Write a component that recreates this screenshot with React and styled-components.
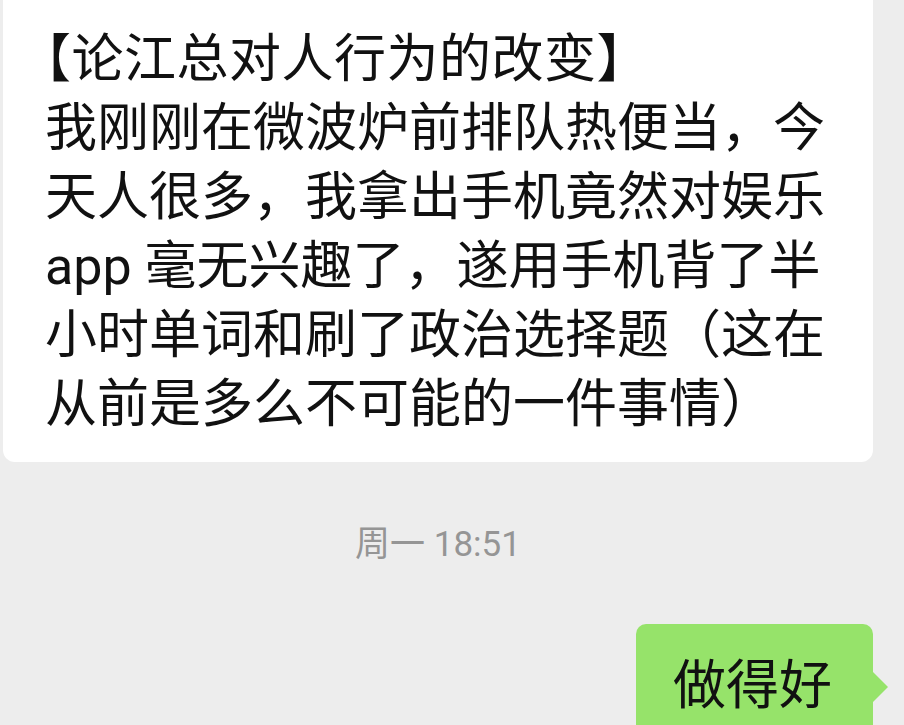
import React from "react"
import styled, { createGlobalStyle } from "styled-components"

const GlobalStyle = createGlobalStyle`
  html, body {
    margin: 0;
    padding: 0;
    background: #ededed;
  }
  body {
    font-family: Roboto, "Noto Sans CJK SC", sans-serif;
  }
`

const Page = styled.div`
  width: 904px;
  height: 725px;
  overflow: hidden;
  display: flex;
  flex-direction: column;
  padding: 0 31px 0 3px;
  box-sizing: border-box;
`

const IncomingBubble = styled.div`
  margin-top: -20px;
  background: #ffffff;
  border-radius: 12px;
  padding: 45px 20px 23px 42px;
`

const Line = styled.div`
  font-size: 52px;
  line-height: 69px;
  color: #111111;
  white-space: nowrap;
  font-feature-settings: ${(p) => (p.$title ? '"halt"' : "normal")};
  letter-spacing: ${(p) => (p.$title ? "0.5px" : "0")};
`

const TimeStamp = styled.div`
  margin-top: 63px;
  text-align: center;
  font-size: 35px;
  line-height: 40px;
  color: #959595;
`

const OutgoingRow = styled.div`
  margin-top: 59px;
  display: flex;
  justify-content: flex-end;
`

const OutgoingBubble = styled.div`
  position: relative;
  width: 237px;
  box-sizing: border-box;
  background: #96e36a;
  border-radius: 10px;
  padding: 28px 0 30px 37px;
  font-size: 53px;
  line-height: 69px;
  color: #111111;

  &::after {
    content: "";
    position: absolute;
    right: -15px;
    top: 47px;
    border-style: solid;
    border-width: 16px 0 16px 16px;
    border-color: transparent transparent transparent #96e36a;
  }
`

const lines = [
  "【论江总对人行为的改变】",
  "我刚刚在微波炉前排队热便当，今",
  "天人很多，我拿出手机竟然对娱乐",
  "app 毫无兴趣了，遂用手机背了半",
  "小时单词和刷了政治选择题（这在",
  "从前是多么不可能的一件事情）",
]

const App = () => {
  return (
    <>
      <GlobalStyle />
      <Page>
        <IncomingBubble>
          {lines.map((text, i) => (
            <Line key={text} $title={i === 0}>
              {text}
            </Line>
          ))}
        </IncomingBubble>
        <TimeStamp>周一 18:51</TimeStamp>
        <OutgoingRow>
          <OutgoingBubble>做得好</OutgoingBubble>
        </OutgoingRow>
      </Page>
    </>
  )
}

export default App
